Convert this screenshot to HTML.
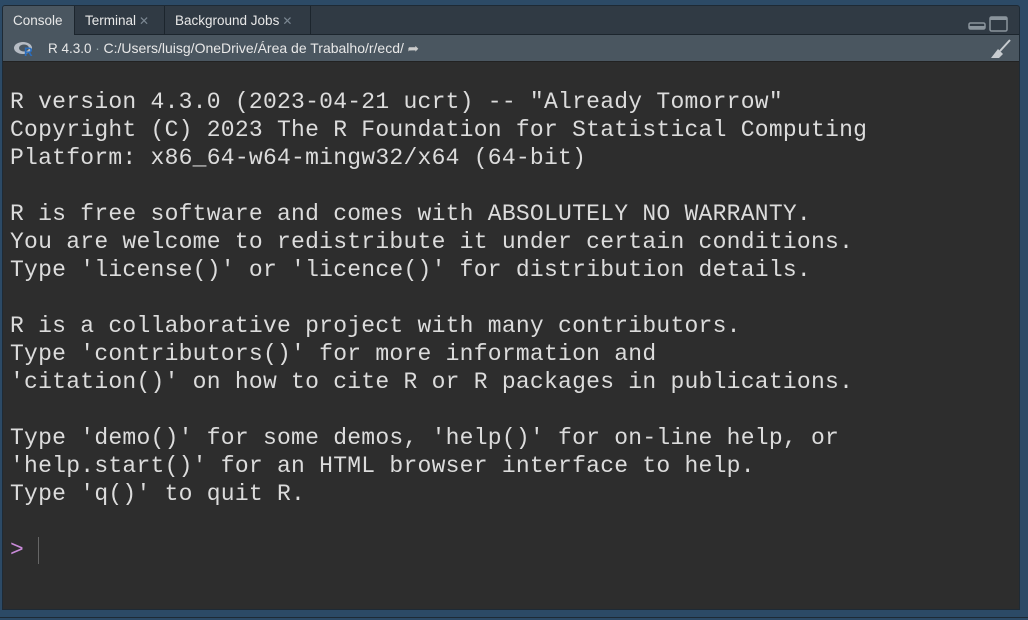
<!DOCTYPE html>
<html><head><style>
body{margin:0;width:1028px;height:620px;background:#2c4a66;overflow:hidden;font-family:"Liberation Sans",sans-serif;position:relative}
.panel{position:absolute;left:2px;top:5px;width:1016px;height:603px;background:#2d2d2d;border:1px solid #1e2a35;border-radius:3px 3px 0 0;overflow:hidden}
.tabs{position:absolute;left:0;top:0;width:100%;height:28px;background:#303a44;border-bottom:1px solid #1c252d}
.tab{position:absolute;top:0;height:28px;font-size:13.5px;color:#e8e8e8;line-height:30px;box-sizing:border-box;border-right:1px solid #1c252d;padding-left:10px}
.tab .x{color:#7b8792;font-size:12px;margin-left:3px}
.tool{position:absolute;left:0;top:29px;width:100%;height:26px;background:#4a5660;border-bottom:1px solid #222;font-size:13.5px;color:#e8e8e8;line-height:26px}
.con{position:absolute;left:10px;top:88px;font-family:"Liberation Mono",monospace;font-size:23px;letter-spacing:0.25px;line-height:28px;color:#dcdcdc;white-space:pre;margin:0}
</style></head><body>
<div class="panel">
<div class="tabs">
<div class="tab" style="left:0;width:72px;background:#4a5660;height:29px;border-bottom:none">Console</div>
<div class="tab" style="left:72px;width:90px">Terminal<span class="x">✕</span></div>
<div class="tab" style="left:162px;width:146px">Background Jobs<span class="x">✕</span></div>
<svg style="position:absolute;left:965px;top:10px" width="42" height="16"><rect x="1" y="7" width="16" height="6" rx="1.5" fill="none" stroke="#8a949c" stroke-width="1.5"/><rect x="1" y="10" width="16" height="3" fill="#8a949c"/><rect x="22" y="1" width="17" height="14" rx="1.5" fill="none" stroke="#8a949c" stroke-width="1.5"/><rect x="22" y="1" width="17" height="3" fill="#8a949c"/></svg>
</div>
<div class="tool">
<svg style="position:absolute;left:10px;top:6px" width="24" height="16"><ellipse cx="10" cy="7" rx="9" ry="6" fill="#b6bcc4"/><ellipse cx="11" cy="7" rx="5" ry="3.5" fill="#4a5660"/><text x="11" y="15" font-family="Liberation Sans" font-weight="bold" font-size="12" fill="#2a6ebf">R</text></svg>
<span style="position:absolute;left:45px">R 4.3.0 <span style="color:#9aa">·</span> <span style="font-size:14px">C:/Users/luisg/OneDrive/Área de Trabalho/r/ecd/</span> <span style="color:#ccc">➦</span></span>
<svg style="position:absolute;left:985px;top:4px" width="24" height="20"><path d="M22 1 L12 12" stroke="#c8ccd0" stroke-width="2"/><path d="M10 10 L15 15 L11 19 L3 19 Z" fill="#c8ccd0"/></svg>
</div>
</div>
<pre class="con">
R version 4.3.0 (2023-04-21 ucrt) -- "Already Tomorrow"
Copyright (C) 2023 The R Foundation for Statistical Computing
Platform: x86_64-w64-mingw32/x64 (64-bit)

R is free software and comes with ABSOLUTELY NO WARRANTY.
You are welcome to redistribute it under certain conditions.
Type 'license()' or 'licence()' for distribution details.

R is a collaborative project with many contributors.
Type 'contributors()' for more information and
'citation()' on how to cite R or R packages in publications.

Type 'demo()' for some demos, 'help()' for on-line help, or
'help.start()' for an HTML browser interface to help.
Type 'q()' to quit R.

<span style="color:#c88ad8">&gt;</span></pre>
<div style="position:absolute;left:38px;top:537px;width:1px;height:27px;background:#666"></div>
<div style="position:absolute;left:0;top:617px;width:1028px;height:1px;background:#1e2a35"></div>
</body></html>
